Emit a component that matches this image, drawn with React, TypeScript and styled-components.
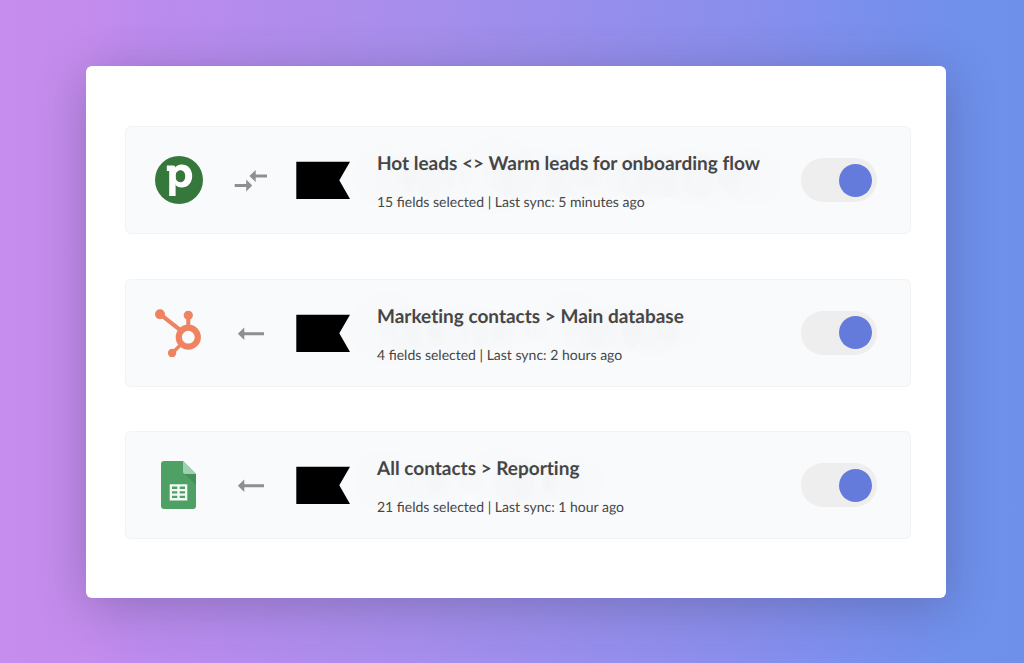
import React from "react";
import styled, { createGlobalStyle } from "styled-components";

const GlobalStyle = createGlobalStyle`
  *, *::before, *::after { box-sizing: border-box; }
  body {
    margin: 0;
    font-family: Lato, "Liberation Sans", sans-serif;
    color: #464646;
    text-rendering: geometricPrecision;
  }
`;

const Page = styled.main`
  min-height: 100vh;
  display: flex;
  padding: 66px 78px 65px 86px;
  background: linear-gradient(90deg, #c68cee 0%, #c48ced 8%, #bc8bee 14%, #a68eec 42%, #8a8eec 72%, #808fee 80%, #6f90eb 94%, #6e90eb 100%);
`;

const Panel = styled.section`
  flex: 1;
  display: flex;
  padding: 60px 35px 59px 39px;
  background: #ffffff;
  border-radius: 6px;
  box-shadow: 0 8px 50px rgba(50, 50, 80, 0.32);
`;

const SyncList = styled.ul`
  flex: 1;
  display: flex;
  flex-direction: column;
  justify-content: space-between;
  gap: 44px;
  margin: 0;
  padding: 0;
  list-style: none;
`;

const SyncRow = styled.li`
  display: grid;
  grid-template-columns: 48px 39px 54px 1fr 76px;
  column-gap: 27px;
  align-items: center;
  min-height: 108px;
  padding: 0 33px 0 29px;
  background: #f9fafc;
  border: 1px solid #f1f3f4;
  border-radius: 6px;

  svg { display: block; }
`;

const SyncText = styled.div`
  display: flex;
  flex-direction: column;
  gap: 16px;
  padding-top: 4px;
  text-shadow: 0 12px 50px rgba(0, 0, 0, 0.28);
`;

const Title = styled.h2`
  margin: 0;
  font-size: 19px;
  line-height: 24px;
  font-weight: 700;
  font-variant-ligatures: no-common-ligatures;
`;

const Detail = styled.p`
  margin: 0;
  font-size: 14px;
  line-height: 20px;
`;

const Switch = styled.input`
  appearance: none;
  display: flex;
  align-items: center;
  justify-content: flex-start;
  width: 76px;
  height: 44px;
  margin: 0;
  padding: 0 5px;
  border-radius: 22px;
  background: #eeeeee;
  cursor: pointer;

  &::before {
    content: "";
    width: 33px;
    height: 33px;
    border-radius: 50%;
    background: #a5a5a5;
  }

  &:checked { justify-content: flex-end; }
  &:checked::before { background: #647bdb; }
`;

const PipedriveLogo = () => (
  <svg width="48" height="48" viewBox="0 0 48 48" role="img" aria-label="Pipedrive">
    <circle cx="24" cy="24" r="24" fill="#36783c" />
    <path d="M11.8 9.6H18.3Q20.4 9.6 20.6 12V40H14.2V15H11.8Z" fill="#fff" />
    <path
      fill="#fff"
      fillRule="evenodd"
      d="M26.6 8.6C33 8.6 37.2 13.4 37.2 20.1S32.9 31.6 26.7 31.6C23.6 31.6 21.6 30.2 20.2 28.5L19.8 12C21.2 10 23.5 8.6 26.6 8.6ZM25.5 14.2C22.6 14.2 20.5 16.5 20.5 20.3S22.6 26.2 25.5 26.2S30.2 24 30.2 20.2S28.3 14.2 25.5 14.2Z"
    />
  </svg>
);

const HubspotLogo = () => (
  <svg width="48" height="48" viewBox="0 0 48 48" role="img" aria-label="HubSpot">
    <g stroke="#ef8260" fill="none">
      <path d="M5 5.2L26 21.6" strokeWidth="4.2" />
      <path d="M33.3 6.5V19" strokeWidth="4" />
      <path d="M17 44.2L27 34.5" strokeWidth="3.4" />
      <circle cx="33.3" cy="28.2" r="9.5" strokeWidth="6.2" />
    </g>
    <g fill="#ef8260">
      <circle cx="5" cy="5.2" r="5" />
      <circle cx="33.3" cy="6.3" r="4.6" />
      <circle cx="17.1" cy="44" r="4.2" />
    </g>
  </svg>
);

const SheetsLogo = () => (
  <svg width="48" height="48" viewBox="0 0 48 48" role="img" aria-label="Google Sheets">
    <path d="M9 0H28L41 13V45Q41 48 38 48H9Q6 48 6 45V3Q6 0 9 0Z" fill="#4fa065" />
    <path d="M29 12.5L41 24V13Z" fill="#45905a" />
    <path d="M28 0L41 13H30.5Q28 13 28 10.5Z" fill="#a0d0b0" />
    <path
      fill="#f4f8f5"
      fillRule="evenodd"
      d="M14.7 23.3H32.3V39.4H14.7ZM17 25.6V28H22.3V25.6ZM24.7 25.6V28H30V25.6ZM17 30.2V32.5H22.3V30.2ZM24.7 30.2V32.5H30V30.2ZM17 34.7V37.1H22.3V34.7ZM24.7 34.7V37.1H30V34.7Z"
    />
  </svg>
);

const TwoWayArrows = () => (
  <svg width="39" height="24" viewBox="0 0 39 24" fill="#8f8f8f" role="img" aria-label="Syncs both ways">
    <path d="M19.4 8L25.7 2V6.5H37V9.5H25.7V14Z" />
    <path d="M22.2 17.4L16.2 11.4V15.9H4.7V18.9H16.2V23.4Z" />
  </svg>
);

const OneWayArrow = () => (
  <svg width="39" height="24" viewBox="0 0 39 24" fill="#8f8f8f" role="img" aria-label="Syncs one way">
    <path d="M7.8 12.7L14.3 6.5V11.2H34V14.2H14.3V18.9Z" />
  </svg>
);

const Flag = () => (
  <svg width="54" height="38" viewBox="0 0 54 38" aria-hidden="true">
    <path d="M0.3 0.7H54L43.3 19.3L54 38H0.3Z" fill="#000" />
  </svg>
);

const syncs = [
  {
    id: "hot-leads",
    Logo: PipedriveLogo,
    Arrow: TwoWayArrows,
    title: "Hot leads <> Warm leads for onboarding flow",
    detail: "15 fields selected | Last sync: 5 minutes ago",
  },
  {
    id: "marketing-contacts",
    Logo: HubspotLogo,
    Arrow: OneWayArrow,
    title: "Marketing contacts > Main database",
    detail: "4 fields selected | Last sync: 2 hours ago",
  },
  {
    id: "all-contacts",
    Logo: SheetsLogo,
    Arrow: OneWayArrow,
    title: "All contacts > Reporting",
    detail: "21 fields selected | Last sync: 1 hour ago",
  },
];

export default function App() {
  return (
    <>
      <GlobalStyle />
      <Page>
        <Panel>
          <SyncList>
            {syncs.map(({ id, Logo, Arrow, title, detail }) => (
              <SyncRow key={id}>
                <Logo />
                <Arrow />
                <Flag />
                <SyncText>
                  <Title id={id}>{title}</Title>
                  <Detail>{detail}</Detail>
                </SyncText>
                <Switch type="checkbox" role="switch" defaultChecked aria-labelledby={id} />
              </SyncRow>
            ))}
          </SyncList>
        </Panel>
      </Page>
    </>
  );
}
